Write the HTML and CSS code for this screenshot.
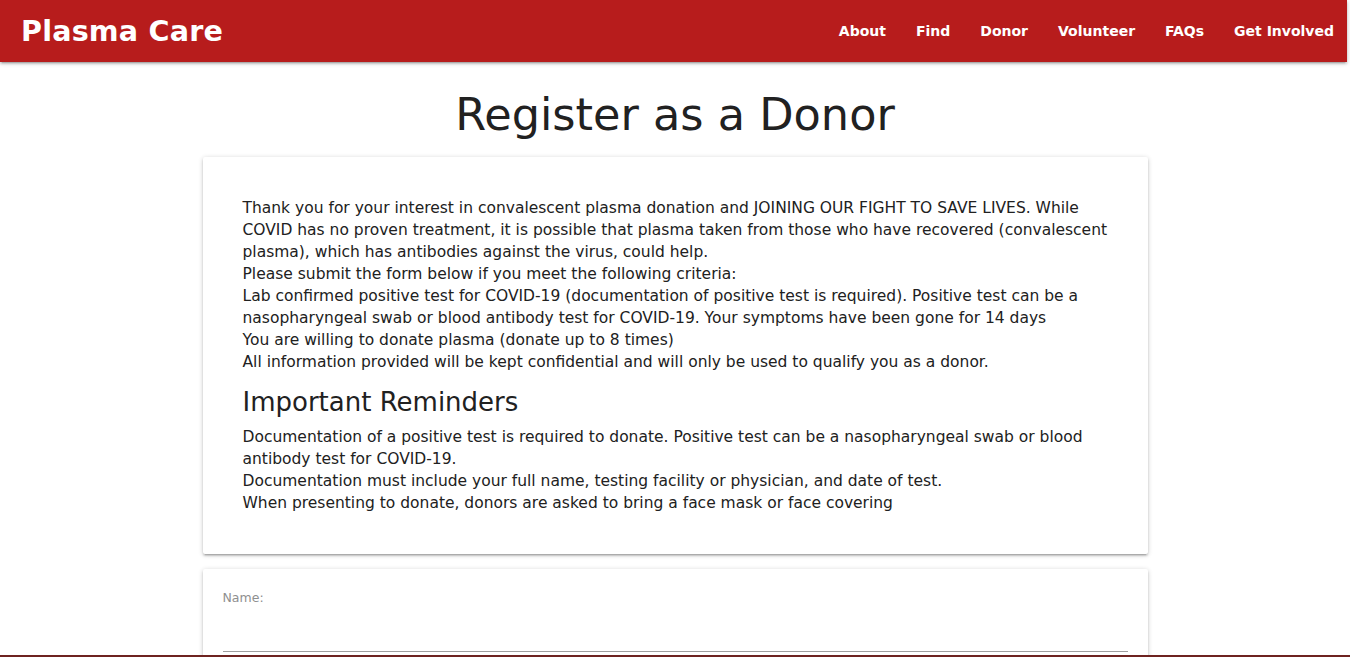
FILE: index.html
```html
<!DOCTYPE html>
<html lang="en">
<head>
<meta charset="utf-8">
<title>Plasma Care - Register as a Donor</title>
<link rel="stylesheet" href="styles.css">
</head>
<body>
<nav class="navbar">
  <a class="brand" href="#">Plasma Care</a>
  <ul class="nav-links">
    <li><a href="#">About</a></li>
    <li><a href="#">Find</a></li>
    <li><a href="#">Donor</a></li>
    <li><a href="#">Volunteer</a></li>
    <li><a href="#">FAQs</a></li>
    <li><a href="#">Get Involved</a></li>
  </ul>
</nav>
<main class="container">
  <h1 class="page-title">Register as a Donor</h1>
  <section class="card info-card">
    <p>Thank you for your interest in convalescent plasma donation and JOINING OUR FIGHT TO SAVE LIVES. While COVID has no proven treatment, it is possible that plasma taken from those who have recovered (convalescent plasma), which has antibodies against the virus, could help.</p>
    <p>Please submit the form below if you meet the following criteria:</p>
    <p>Lab confirmed positive test for COVID-19 (documentation of positive test is required). Positive test can be a nasopharyngeal swab or blood antibody test for COVID-19. Your symptoms have been gone for 14 days</p>
    <p>You are willing to donate plasma (donate up to 8 times)</p>
    <p>All information provided will be kept confidential and will only be used to qualify you as a donor.</p>
    <h2 class="section-title">Important Reminders</h2>
    <p>Documentation of a positive test is required to donate. Positive test can be a nasopharyngeal swab or blood antibody test for COVID-19.</p>
    <p>Documentation must include your full name, testing facility or physician, and date of test.</p>
    <p>When presenting to donate, donors are asked to bring a face mask or face covering</p>
  </section>
  <section class="card form-card">
    <label class="field-label" for="name">Name:</label>
    <input class="field-input" id="name" type="text">
  </section>
</main>
<div class="bottom-strip"></div>
</body>
</html>
```

FILE: styles.css
```css
* { box-sizing: border-box; }
html, body { margin: 0; padding: 0; }
body {
  font-family: "DejaVu Sans", "Open Sans", sans-serif;
  color: #212121;
  background: #fff;
  overflow: hidden;
  height: 657px;
}
.navbar {
  height: 62px;
  width: 1347px;
  background: #b71c1c;
  display: flex;
  align-items: center;
  justify-content: space-between;
  padding-left: 21px;
  box-shadow: 0 2px 2px 0 rgba(0,0,0,.14), 0 3px 1px -2px rgba(0,0,0,.12), 0 1px 5px 0 rgba(0,0,0,.2);
  position: relative;
  z-index: 2;
}
.brand {
  color: #fff;
  text-decoration: none;
  font-size: 28.6px;
  font-weight: bold;
  letter-spacing: 0.2px;
}
.nav-links {
  list-style: none;
  margin: 0;
  padding: 0;
  display: flex;
}
.nav-links a {
  display: block;
  padding: 0 15px;
  line-height: 60px;
  color: #fff;
  text-decoration: none;
  font-size: 14px;
  font-weight: bold;
}
.nav-links li:last-child a {
  padding-right: 13px;
}
.container {
  width: 945px;
  margin: 0 auto;
}
.page-title {
  margin: 23px 0 0;
  text-align: center;
  font-size: 44.6px;
  line-height: 60px;
  font-weight: normal;
  color: #212121;
}
.card {
  background: #fff;
  border-radius: 2px;
  box-shadow: 0 2px 2px 0 rgba(0,0,0,.14), 0 3px 1px -2px rgba(0,0,0,.12), 0 1px 5px 0 rgba(0,0,0,.2);
}
.info-card {
  margin-top: 12px;
  padding: 40px 40px 40px 40px;
  font-size: 15.5px;
  line-height: 22px;
}
.info-card p {
  margin: 0;
}
.section-title {
  margin: 12px 0 7px;
  font-size: 26px;
  line-height: 34px;
  font-weight: normal;
}
.form-card {
  margin-top: 15px;
  padding: 20px 20px 0;
  height: 100px;
}
.field-label {
  display: block;
  margin-top: 1px;
  font-size: 12.5px;
  line-height: 16px;
  color: #8f8f8f;
}
.field-input {
  display: block;
  width: 100%;
  height: 46px;
  border: none;
  border-bottom: 1px solid #9e9e9e;
  outline: none;
  background: transparent;
  font: inherit;
}
.bottom-strip {
  position: fixed;
  left: 0;
  right: 0;
  bottom: 0;
  height: 2px;
  background: #6e2320;
  z-index: 5;
}
```
